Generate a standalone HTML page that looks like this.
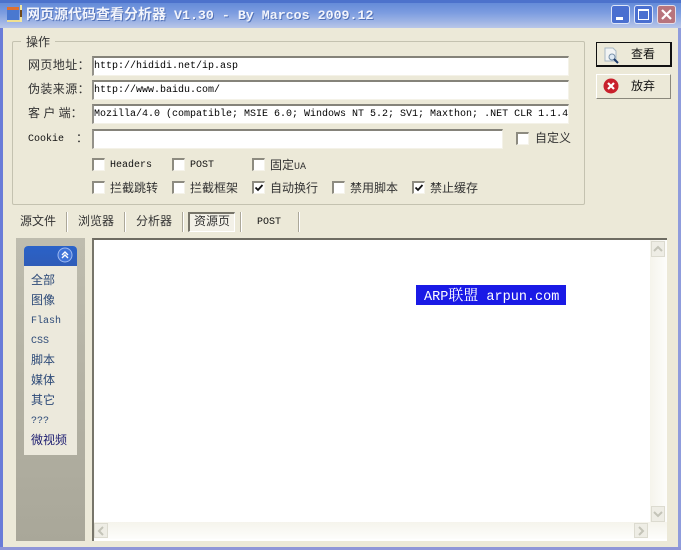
<!DOCTYPE html>
<html><head><meta charset="utf-8"><style>
html,body{margin:0;padding:0}
body{width:681px;height:550px;position:relative;overflow:hidden;background:#ece9d8;font-family:"Liberation Mono","Noto Serif CJK SC",monospace;color:#222}
div,span{position:absolute;box-sizing:border-box;white-space:nowrap}
.cjk{font-family:"Liberation Sans","Noto Sans CJK SC",sans-serif;font-size:12px;line-height:14px;color:#333}
.inp{left:92px;width:477px;height:20px;background:#fff;border-top:2px solid #85837a;border-left:2px solid #94928a;border-right:1px solid #f4f2e8;border-bottom:1px solid #f4f2e8;font:10px/17px "Liberation Mono",monospace;padding-left:0;color:#000;overflow:hidden}
.cb{width:13px;height:13px;background:#fff;border-top:2px solid #8d8b80;border-left:2px solid #8d8b80;border-right:1px solid #f5f3ea;border-bottom:1px solid #f5f3ea}
.m{font:10px/14px "Liberation Mono",monospace;color:#111}
.sep{top:212px;height:20px;background:#aca899;border-right:1px solid #fff;width:2px}
.btn{left:597px;width:74px;height:24px;background:#ece9d8;border:1px solid #fff;border-right-color:#8a887c;border-bottom-color:#8a887c}
.nav{left:31px;font-family:"Liberation Sans","Noto Sans CJK SC",sans-serif;font-size:12px;line-height:14px;color:#2d4a78}
.sb{width:14px;height:16px;background:#eeede5;border:1px solid #dcdbd0}
b.t{font-weight:bold;font-size:14px}
</style></head><body>
<div style="left:0;top:0;width:681px;height:28px;background:linear-gradient(#5d86d6 0,#7c9ce0 45%,#9bb2e4 75%,#b9c7e8 100%)"></div>
<div style="left:0;top:0;width:681px;height:3px;background:#4c72cc"></div>
<div style="left:0;top:28px;width:3px;height:522px;background:#6a7cd8"></div>
<div style="left:678px;top:28px;width:3px;height:522px;background:#8f9cdc"></div>
<div style="left:0;top:547px;width:681px;height:3px;background:#8f96d8"></div>

<svg style="position:absolute;left:6px;top:4px" width="17" height="19" viewBox="0 0 17 19"><rect x="1" y="5" width="12" height="11" fill="#4a78d0"/><rect x="1" y="3" width="12" height="3" fill="#e07030"/><rect x="1" y="16" width="13" height="2" fill="#f0e090"/><rect x="14" y="1" width="2" height="17" fill="#f4e8a0"/><rect x="14" y="6" width="2" height="7" fill="#704818"/></svg>
<div style="left:26px;top:6px;color:#f2f4fb;font:bold 13.3px/16px 'Liberation Mono','Noto Serif CJK SC',monospace;text-shadow:1px 1px 0 #5272b8"><b class="t" style="font-family:'Noto Sans CJK SC',sans-serif">网页源代码查看分析器</b> V1.30 - By Marcos 2009.12</div>

<div style="left:611px;top:5px;width:19px;height:19px;border-radius:3px;background:#4a6fd0;border:1px solid #dfe6f8"></div>
<div style="left:616px;top:17px;width:7px;height:3px;background:#fff"></div>
<div style="left:634px;top:5px;width:19px;height:19px;border-radius:3px;background:#4a6fd0;border:1px solid #dfe6f8"></div>
<div style="left:638px;top:9px;width:11px;height:11px;border:1px solid #fff;border-top-width:2px"></div>
<div style="left:657px;top:5px;width:19px;height:19px;border-radius:3px;background:#b8747c;border:1px solid #e6dde6"></div>
<svg style="position:absolute;left:660px;top:8px" width="13" height="13"><path d="M2 2L11 11M11 2L2 11" stroke="#fff" stroke-width="2.2"/></svg>

<div style="left:12px;top:41px;width:573px;height:164px;border:1px solid #c4c2b0;border-radius:2px"></div>
<div class="cjk" style="left:21px;top:35px;background:#ece9d8;padding:0 5px">操作</div>

<div class="cjk" style="left:28px;top:58px;letter-spacing:.4px">网页地址：</div>
<div class="inp" style="top:56px">http://hididi.net/ip.asp</div>
<div class="cjk" style="left:28px;top:82px;letter-spacing:.4px">伪装来源：</div>
<div class="inp" style="top:80px">http://www.baidu.com/</div>
<div class="cjk" style="left:28px;top:106px">客 户 端：</div>
<div class="inp" style="top:104px">Mozilla/4.0 (compatible; MSIE 6.0; Windows NT 5.2; SV1; Maxthon; .NET CLR 1.1.4</div>
<div class="m" style="left:28px;top:133px">Cookie</div>
<div class="cjk" style="left:76px;top:131px">：</div>
<div class="inp" style="top:129px;width:411px"></div>

<div class="cb" style="left:516px;top:132px"></div>
<div class="cjk" style="left:535px;top:131px">自定义</div>

<div class="cb" style="left:92px;top:158px"></div><div class="m" style="left:110px;top:159px">Headers</div>
<div class="cb" style="left:172px;top:158px"></div><div class="m" style="left:190px;top:159px">POST</div>
<div class="cb" style="left:252px;top:158px"></div><div class="cjk" style="left:270px;top:158px">固定<span style="position:static;font:10px 'Liberation Mono',monospace">UA</span></div>

<div class="cb" style="left:92px;top:181px"></div><div class="cjk" style="left:110px;top:181px">拦截跳转</div>
<div class="cb" style="left:172px;top:181px"></div><div class="cjk" style="left:190px;top:181px">拦截框架</div>
<div class="cb" style="left:252px;top:181px"></div><div class="cjk" style="left:270px;top:181px">自动换行</div>
<svg style="position:absolute;left:254px;top:183px" width="10" height="10"><path d="M1.5 4.5L4 7L8.5 2" fill="none" stroke="#111" stroke-width="1.8"/></svg>
<div class="cb" style="left:332px;top:181px"></div><div class="cjk" style="left:350px;top:181px">禁用脚本</div>
<div class="cb" style="left:412px;top:181px"></div><div class="cjk" style="left:430px;top:181px">禁止缓存</div>
<svg style="position:absolute;left:414px;top:183px" width="10" height="10"><path d="M1.5 4.5L4 7L8.5 2" fill="none" stroke="#111" stroke-width="1.8"/></svg>

<div class="btn" style="top:42px;left:596px;width:76px;height:25px;border:1px solid #111;border-right-width:2px;border-bottom-width:2px"></div>
<svg style="position:absolute;left:603px;top:47px" width="18" height="17"><path d="M2 1H10L13 4V14H2Z" fill="#f2f4f4" stroke="#a8b8c4"/><circle cx="9" cy="10" r="3" fill="#dfeaf4" stroke="#7890a8"/><path d="M11 12L15 16" stroke="#1c3a6a" stroke-width="2"/></svg>
<div class="cjk" style="left:631px;top:47px;color:#111">查看</div>
<div class="btn" style="top:74px;left:596px;width:75px;height:25px"></div>
<svg style="position:absolute;left:603px;top:78px" width="16" height="16"><circle cx="8" cy="8" r="7.5" fill="#c8202c"/><path d="M5 5L11 11M11 5L5 11" stroke="#fff" stroke-width="2.2"/></svg>
<div class="cjk" style="left:631px;top:79px;color:#111">放弃</div>

<div class="cjk" style="left:20px;top:214px">源文件</div>
<div class="sep" style="left:66px"></div>
<div class="cjk" style="left:78px;top:214px">浏览器</div>
<div class="sep" style="left:124px"></div>
<div class="cjk" style="left:136px;top:214px">分析器</div>
<div class="sep" style="left:182px"></div>
<div style="left:188px;top:212px;width:47px;height:20px;background:#f3f1e8;border:1px solid #fff;border-top:2px solid #77756a;border-left:2px solid #77756a"></div>
<div class="cjk" style="left:194px;top:214px">资源页</div>
<div class="sep" style="left:240px"></div>
<div class="m" style="left:257px;top:216px;color:#111">POST</div>
<div class="sep" style="left:298px"></div>

<div style="left:16px;top:238px;width:69px;height:303px;background:linear-gradient(#bebcae,#a9a799)"></div>
<div style="left:24px;top:246px;width:53px;height:209px;background:#ece9dc;border-radius:4px 4px 0 0"></div>
<div style="left:24px;top:246px;width:53px;height:20px;background:linear-gradient(#2a62c8,#2f5cb8);border-radius:4px 4px 0 0"></div>
<svg style="position:absolute;left:57px;top:247px" width="16" height="16"><circle cx="8" cy="8" r="7" fill="#3f73d8" stroke="#9db8f0"/><path d="M5 8L8 5L11 8M5 11L8 8L11 11" fill="none" stroke="#fff" stroke-width="1.4"/></svg>
<div class="nav" style="top:273px">全部</div>
<div class="nav" style="top:293px">图像</div>
<div class="nav" style="top:315px;font:10px/14px 'Liberation Mono',monospace">Flash</div>
<div class="nav" style="top:335px;font:10px/14px 'Liberation Mono',monospace">CSS</div>
<div class="nav" style="top:353px">脚本</div>
<div class="nav" style="top:373px">媒体</div>
<div class="nav" style="top:393px">其它</div>
<div class="nav" style="top:415px;font:10px/14px 'Liberation Mono',monospace">???</div>
<div class="nav" style="top:433px;color:#1c1c70">微视频</div>

<div style="left:92px;top:238px;width:575px;height:303px;background:#fff;border-top:2px solid #6e6c62;border-left:2px solid #77756a"></div>
<div style="left:650px;top:240px;width:17px;height:298px;background:linear-gradient(90deg,#f5f4ec,#fdfdfb)"></div>
<div style="left:94px;top:522px;width:573px;height:17px;background:linear-gradient(#f5f4ec,#fdfdfb)"></div>
<div class="sb" style="left:651px;top:241px"></div>
<svg style="position:absolute;left:653px;top:245px" width="10" height="8"><path d="M1 6L5 2L9 6" fill="none" stroke="#c4c4b8" stroke-width="2"/></svg>
<div class="sb" style="left:651px;top:506px"></div>
<svg style="position:absolute;left:653px;top:510px" width="10" height="8"><path d="M1 2L5 6L9 2" fill="none" stroke="#c4c4b8" stroke-width="2"/></svg>
<div class="sb" style="left:94px;top:523px;height:15px"></div>
<svg style="position:absolute;left:97px;top:526px" width="8" height="10"><path d="M6 1L2 5L6 9" fill="none" stroke="#c4c4b8" stroke-width="2"/></svg>
<div class="sb" style="left:634px;top:523px;height:15px"></div>
<svg style="position:absolute;left:637px;top:526px" width="8" height="10"><path d="M2 1L6 5L2 9" fill="none" stroke="#c4c4b8" stroke-width="2"/></svg>

<div style="left:416px;top:285px;width:150px;height:20px;background:#1a1ae6;color:#fff;font:13.5px/20px 'Liberation Mono','Noto Serif CJK SC',monospace;padding-left:8px">ARP<span style="position:static;font-size:15px;font-family:'Noto Serif CJK SC',serif">联盟</span> arpun.com</div>
</body></html>
